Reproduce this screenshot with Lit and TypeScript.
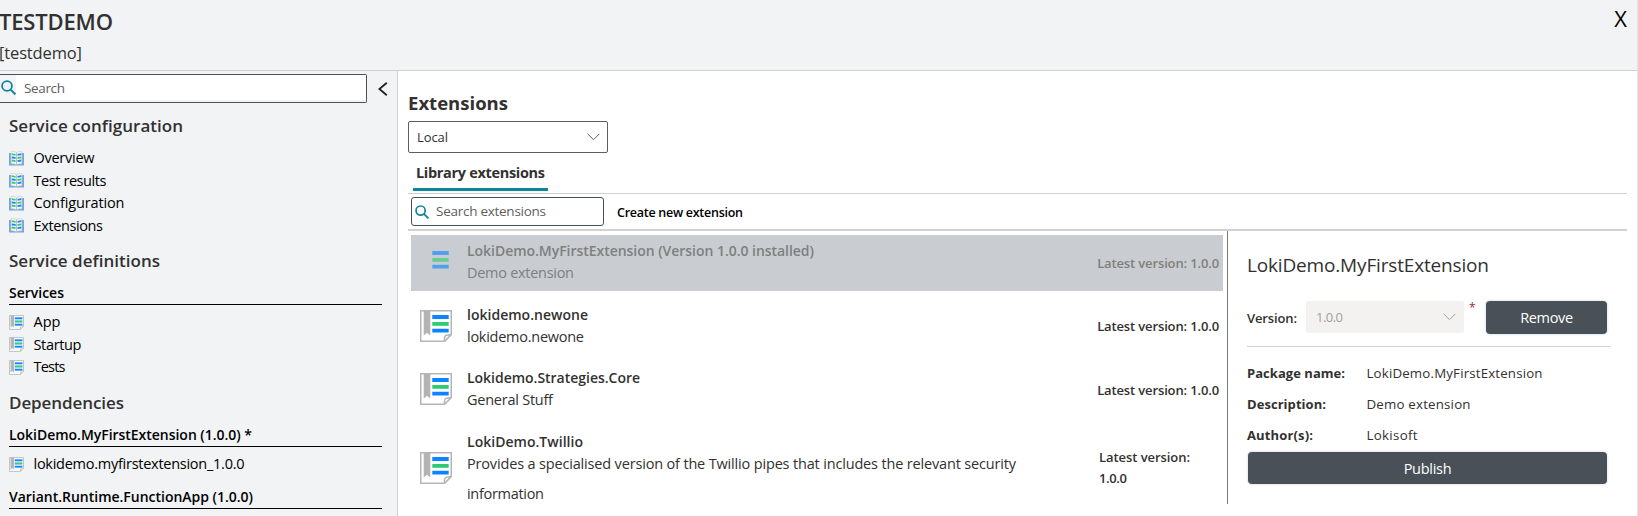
import { LitElement, html, css, nothing } from 'lit';
import { customElement, property } from 'lit/decorators.js';

/** A single-line label whose tracking is adjusted so it spans a given width. */
@customElement('fit-label')
class FitLabel extends LitElement {
  @property({ type: Number }) span = 0;
  @property() text = '';
  static styles = css`
    :host { display: inline-block; white-space: pre; }
  `;
  firstUpdated() {
    const el = this.renderRoot.querySelector('span')!;
    const natural = el.getBoundingClientRect().width;
    if (this.span) el.style.letterSpacing = `${(this.span - natural) / Math.max(1, this.text.length - 1)}px`;
  }
  render() {
    return html`<span>${this.text}</span>`;
  }
}

const t = (text: string, span: number, cls = '') =>
  html`<fit-label class=${cls} .text=${text} .span=${span}></fit-label>`;

const docIcon = html`<svg class="doc" width="32" height="32" viewBox="0 0 32 32">
  <path class="sheet" d="M.75 .75H31.25V24.5L24.5 31.25H.75Z" fill="#fff" stroke="#b5b5b5" stroke-width="1.5" />
  <path class="sheet" d="M3.7 1H10.3V25.6L7 22.8L3.7 25.6Z" fill="#b3b3b3" />
  <path class="sheet" d="M24.6 31.2C24.2 27.6 24.6 25.6 26.4 25.3L31.2 24.6Z" fill="#fff" stroke="#b5b5b5" stroke-width="1.5" />
  <path d="M12.3 5H28.7V9H12.3ZM12.3 18.7H28.7V22.6H12.3Z" fill="#0a84ff" />
  <path d="M12.3 12H28.7V15.8H12.3Z" fill="#2ecc71" />
</svg>`;

const smallDocIcon = html`<svg width="15" height="15" viewBox="0 0 15 15">
  <path d="M.5 .5H14.5V11.5L11.5 14.5H.5Z" fill="#f6f7f8" stroke="#c3c4c6" />
  <path d="M1.6 .5H5V12.2L3.3 11L1.6 12.2Z" fill="#b4b5b6" />
  <path d="M11.5 14.5V12L14.5 11.5Z" fill="#e6e7e8" stroke="#c3c4c6" stroke-width=".8" />
  <path d="M5.8 2H13.4V11H5.8Z" fill="#b9dcf6" />
  <path d="M5.8 2.4H13.4V4H5.8ZM5.8 8.9H13.4V10.5H5.8Z" fill="#1587fb" />
  <path d="M5.8 5.6H13.4V7.3H5.8Z" fill="#3dcc80" />
</svg>`;

const bookIcon = html`<svg width="15" height="15" viewBox="0 0 15 15">
  <path d="M0 2H2.6V12.6H12.4V2H15V14.4H0Z" fill="#74a6da" />
  <path d="M2.1 .7C4 .4 6 .6 7.5 1.6C9 .6 11 .4 12.9 .7V12.8C11 12.6 9 12.8 7.5 13.9C6 12.8 4 12.6 2.1 12.8Z" fill="#f8f9fa" stroke="#c4c7ca" stroke-width=".7" />
  <path d="M7.5 1.8V14" stroke="#b4b7ba" stroke-width=".9" />
  <g fill="none" stroke-width="1.8">
    <path d="M2.8 3.1L6.6 3.8M2.8 9.5L6.6 10.2" stroke="#35cc77" />
    <path d="M2.8 6.3L6.6 7" stroke="#1c86f5" />
    <path d="M8.5 3.8L12.3 3.1M8.5 10.2L12.3 9.5" stroke="#1c86f5" />
    <path d="M8.5 7L12.3 6.3" stroke="#35cc77" />
  </g>
</svg>`;

const searchIcon = (size: number) => html`<svg class="glass" width=${size} height=${size} viewBox="0 0 15 15" fill="none" stroke="#11849b">
  <circle cx="6" cy="6" r="4.9" stroke-width="1.8" /><path d="M9.6 9.6L14.4 14.4" stroke-width="2" />
</svg>`;

const chevron = html`<svg class="chev" width="13" height="8" viewBox="0 0 13 8" fill="none"><path d="M.6 .8L6.5 6.7L12.4 .8" stroke="currentColor" stroke-width="1" /></svg>`;

interface Ext { name: string; w: number; desc: [string, number][]; latest: [string, number][]; cls?: string; }

const extensions: Ext[] = [
  { name: 'LokiDemo.MyFirstExtension (Version 1.0.0 installed)', w: 347, desc: [['Demo extension', 107]], latest: [['Latest version: 1.0.0', 122]], cls: 'selected' },
  { name: 'lokidemo.newone', w: 121, desc: [['lokidemo.newone', 117]], latest: [['Latest version: 1.0.0', 122]] },
  { name: 'Lokidemo.Strategies.Core', w: 173, desc: [['General Stuff', 86]], latest: [['Latest version: 1.0.0', 122]] },
  { name: 'LokiDemo.Twillio', w: 116, desc: [['Provides a specialised version of the Twillio pipes that includes the relevant security', 549], ['information', 77]], latest: [['Latest version:', 91], ['1.0.0', 28]], cls: 'tall' },
];

@customElement('app-root')
class AppRoot extends LitElement {
  static styles = css`
    :host { display: block; width: 1638px; height: 516px; overflow: hidden; background: #fff; color: #323130;
      font-family: 'Open Sans', 'Noto Sans', sans-serif; font-size: 14.5px; }
    * { box-sizing: border-box; }
    svg { display: block; flex: none; }
    fit-label { flex: none; }
    .frame { display: flex; flex-direction: column; height: 516px; border-right: 1px solid #e3e4e6; }
    header { display: flex; justify-content: space-between; height: 71px; flex: none; background: #f1f3f5; border-bottom: 1px solid #d0d0d0; }
    .names { display: flex; flex-direction: column; }
    .title { font-size: 22px; font-weight: 600; line-height: 30px; margin: 6px 0 0 -1px; }
    .sub { font-size: 16.5px; line-height: 24px; margin: 5px 0 0 -1px; }
    .close { font-size: 22px; line-height: 30px; color: #000; margin: 3px 10px 0 0; }
    .body { display: flex; flex: 1; min-height: 0; }

    aside { width: 398px; flex: none; background: #f1f3f5; border-right: 1px solid #d0d0d0; padding-top: 3px; overflow: hidden; }
    .top { display: flex; align-items: center; }
    .search { display: flex; width: 367px; height: 29px; border: 1px solid #495057; border-left: 0; border-radius: 0 2px 2px 0; }
    .search .glass { margin: 5px 0 0 1px; }
    .field { flex: 1; height: 25px; background: #fff; padding-left: 8px; line-height: 26px; font-size: 13.5px; color: #605e5c; }
    .collapse { margin-left: 11px; }
    .group { font-size: 17px; font-weight: 600; line-height: 24px; height: 24px; padding-left: 9px; }
    .g1 { margin-top: 11px; } .g2 { margin-top: 12.4px; } .g3 { margin-top: 12.8px; }
    .list { display: flex; flex-direction: column; padding-left: 9px; color: #000; }
    .l1 { margin-top: 9.4px; } .l2 { margin-top: 6.4px; }
    .item { display: flex; gap: 9.5px; height: 22.4px; line-height: 22px; }
    .item svg { margin-top: 3.6px; }
    .cap { margin: 0 15px 0 9px; height: 24px; line-height: 24px; font-size: 14px; font-weight: 600; color: #000; border-bottom: 1px solid #000; }
    .c1 { margin-top: 7.4px; } .c2 { margin-top: 7.6px; } .c3 { margin-top: 9.2px; }

    main { flex: 1; padding: 20px 10px 0 10px; min-width: 0; display: flex; flex-direction: column; }
    h1 { margin: 0; font-size: 18.5px; font-weight: 700; line-height: 24px; height: 30px; }
    .select { display: flex; justify-content: space-between; align-items: center; width: 200px; height: 32px; border: 1px solid #605e5c; border-radius: 2px; padding: 0 7px 0 8px; font-size: 13px; flex: none; }
    .select .chev { color: #605e5c; }
    .tabs { display: flex; height: 41px; flex: none; border-bottom: 1px solid #d0d0d0; padding-left: 5px; }
    .tab { height: 37.5px; width: 135px; border-bottom: 3px solid #0f8599; padding: 8px 0 0 3px; line-height: 24px; font-size: 14.5px; font-weight: 700; }
    .tools { display: flex; height: 37px; flex: none; border-bottom: 2px solid #d2d2d2; padding: 3px 0 0 3px; }
    .find { display: flex; width: 193px; height: 29px; border: 1px solid #495057; border-radius: 3px; padding-left: 3px; gap: 7px; line-height: 27px; font-size: 13.5px; color: #605e5c; }
    .find .glass { margin-top: 7px; }
    .create { margin-left: 13px; font-size: 12.5px; font-weight: 600; line-height: 31px; color: #000; }
    .split { display: flex; flex: 1; min-height: 0; }
    .exts { width: 820px; padding: 4px 4px 0 3px; border-right: 1px solid #7b7b7b; height: 273px; overflow: hidden; }
    .row { display: grid; grid-template-columns: 56px 1fr auto; height: 56px; align-items: center; padding-right: 4px; margin-bottom: 7.6px; }
    .row .doc { margin-left: 9px; margin-top: -2px; }
    .text { display: flex; flex-direction: column; align-self: start; padding-top: 5px; }
    .name { font-weight: 600; font-size: 14px; line-height: 22px; }
    .desc { line-height: 22px; }
    .desc + .desc { margin-top: 8px; }
    .latest { display: flex; flex-direction: column; font-size: 13px; font-weight: 600; line-height: 21px; }
    .row.selected { background: #c9cdd1; }
    .selected .text, .selected .latest { color: #7e7f80; }
    .selected .sheet { display: none; }
    .selected .doc { opacity: .62; }
    .row.tall { height: 84px; }
    .tall .latest { width: 120px; margin-top: 1px; }
    .tall .doc { margin-top: 1px; }

    .panel { width: 363px; margin-left: 19px; padding-top: 21px; }
    h2 { margin: 0; font-size: 19px; font-weight: 400; line-height: 26px; height: 49px; }
    .ver { display: flex; height: 46px; border-bottom: 1px solid #d0d0d0; }
    .vl { width: 59px; font-size: 13px; font-weight: 600; line-height: 34px; }
    .ver .select { width: 158px; border: 0; background: #f3f2f1; color: #a19f9d; padding-left: 10px; padding-right: 8px; }
    .ver .select .chev { color: #a19f9d; }
    .star { color: #a4262c; font-size: 12px; line-height: 14px; width: 22px; padding-left: 5px; }
    button { border: 0; padding: 0; font: 14.5px 'Open Sans', sans-serif; background: #495057; color: #fff; border-radius: 4px; box-shadow: 0 0 0 1.5px #eef1f4; }
    .remove { width: 121px; height: 33px; }
    .publish { width: 359px; height: 32px; margin: 1px 0 0 1px; display: block; }
    .facts { display: grid; grid-template-columns: 119.5px 1fr; grid-auto-rows: 31px; padding: 11px 0 0; line-height: 31px; font-size: 13.3px; font-weight: 500; }
    .facts .k { font-weight: 700; font-size: 13px; }
  `;

  private item(icon: unknown, text: string, w: number) {
    return html`<div class="item">${icon}${t(text, w)}</div>`;
  }

  render() {
    return html`<div class="frame">
      <header>
        <div class="names">${t('TESTDEMO', 114, 'title')}${t('[testdemo]', 83, 'sub')}</div>
        <div class="close">X</div>
      </header>
      <div class="body">
        <aside>
          <div class="top">
            <div class="search">${searchIcon(15)}<div class="field">${t('Search', 41)}</div></div>
            <svg class="collapse" width="10" height="14" viewBox="0 0 10 14"><path d="M8.8 .8L1.4 7L8.8 13.2" fill="none" stroke="#222" stroke-width="1.8" /></svg>
          </div>
          <div class="group g1">${t('Service configuration', 174)}</div>
          <div class="list l1">
            ${this.item(bookIcon, 'Overview', 61)}${this.item(bookIcon, 'Test results', 73)}
            ${this.item(bookIcon, 'Configuration', 91)}${this.item(bookIcon, 'Extensions', 69.5)}
          </div>
          <div class="group g2">${t('Service definitions', 151)}</div>
          <div class="cap c1">${t('Services', 55)}</div>
          <div class="list l2">
            ${this.item(smallDocIcon, 'App', 27)}${this.item(smallDocIcon, 'Startup', 48)}${this.item(smallDocIcon, 'Tests', 32)}
          </div>
          <div class="group g3">${t('Dependencies', 115)}</div>
          <div class="cap c2">${t('LokiDemo.MyFirstExtension (1.0.0) *', 243)}</div>
          <div class="list l2">${this.item(smallDocIcon, 'lokidemo.myfirstextension_1.0.0', 211)}</div>
          <div class="cap c3">${t('Variant.Runtime.FunctionApp (1.0.0)', 244)}</div>
        </aside>
        <main>
          <h1>${t('Extensions', 100)}</h1>
          <div class="select">${t('Local', 31)}${chevron}</div>
          <div class="tabs"><div class="tab">${t('Library extensions', 129)}</div></div>
          <div class="tools">
            <div class="find">${searchIcon(14)}${t('Search extensions', 110)}</div>
            <div class="create">${t('Create new extension', 126)}</div>
          </div>
          <div class="split">
            <div class="exts">
              ${extensions.map((e) => html`<div class="row ${e.cls ?? ''}">
                ${docIcon}
                <div class="text">${t(e.name, e.w, 'name')}${e.desc.map(([s, w]) => t(s, w, 'desc'))}</div>
                <div class="latest">${e.latest.map(([s, w]) => t(s, w))}</div>
              </div>`)}
            </div>
            <div class="panel">
              <h2>${t('LokiDemo.MyFirstExtension', 242)}</h2>
              <div class="ver">
                <div class="vl">${t('Version:', 50)}</div>
                <div class="select">${t('1.0.0', 27)}${chevron}</div>
                <div class="star">*</div>
                <button class="remove">${t('Remove', 53)}</button>
              </div>
              <div class="facts">
                <div class="k">${t('Package name:', 98)}</div><div>${t('LokiDemo.MyFirstExtension', 176)}</div>
                <div class="k">${t('Description:', 79)}</div><div>${t('Demo extension', 104)}</div>
                <div class="k">${t('Author(s):', 66)}</div><div>${t('Lokisoft', 51)}</div>
              </div>
              <button class="publish">${t('Publish', 48)}</button>
            </div>
          </div>
        </main>
      </div>
    </div>`;
  }
}
